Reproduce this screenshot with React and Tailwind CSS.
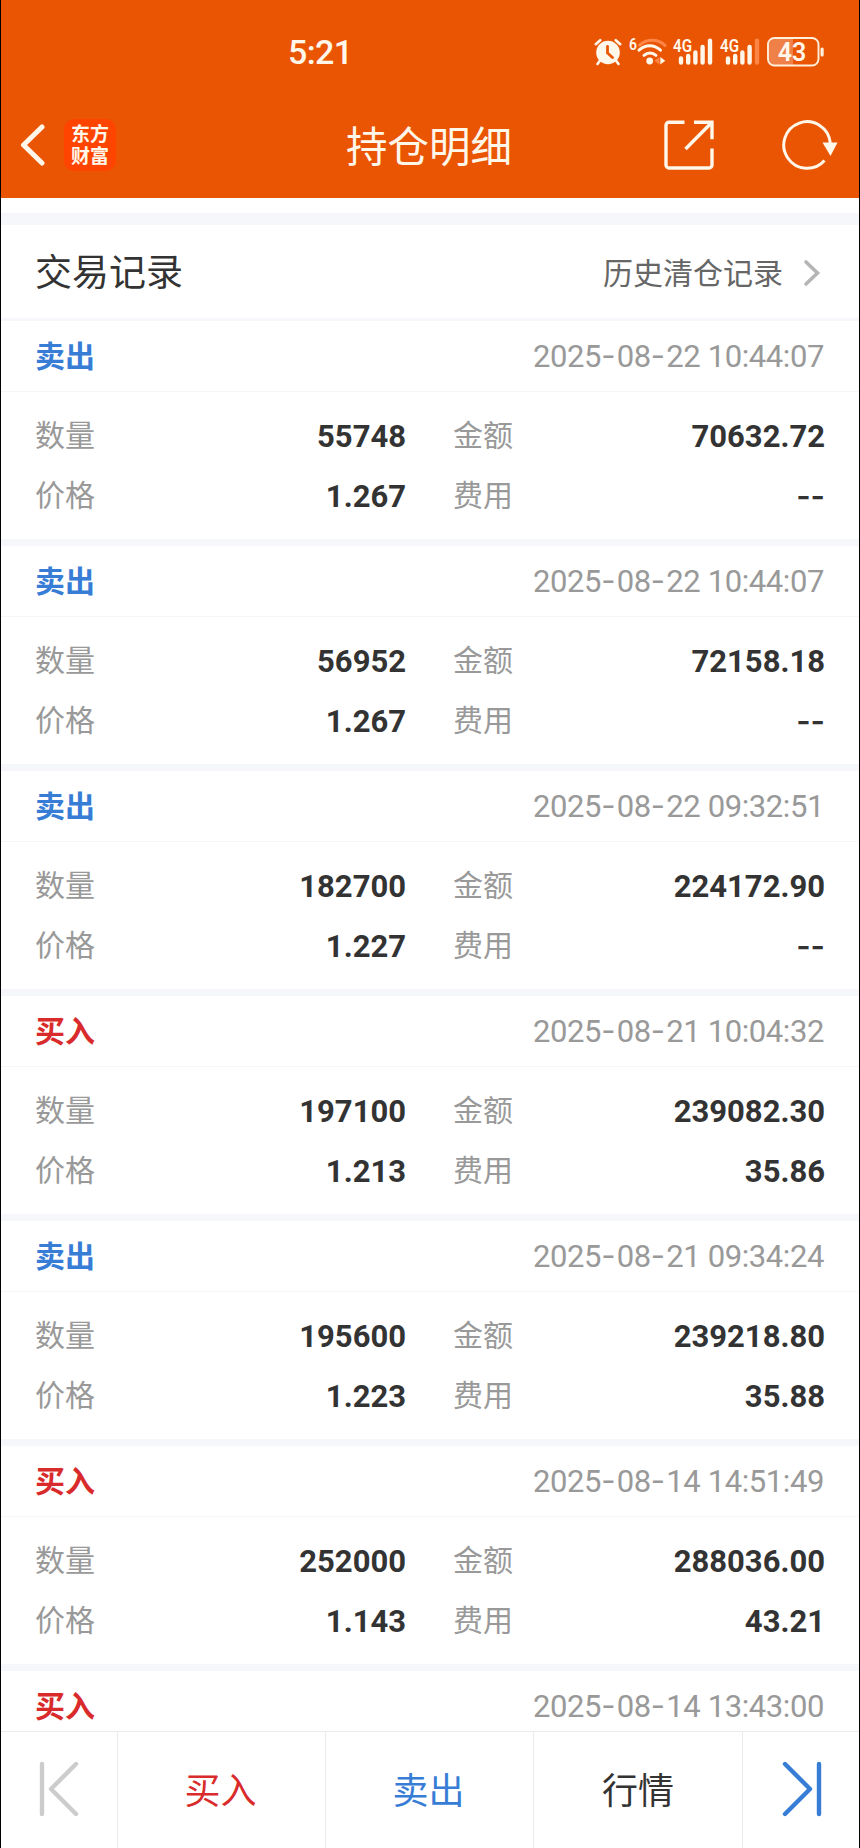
import React from 'react';

const records = [
  { type: 'sell', time: '2025-08-22 10:44:07', qty: '55748', amount: '70632.72', price: '1.267', fee: '--' },
  { type: 'sell', time: '2025-08-22 10:44:07', qty: '56952', amount: '72158.18', price: '1.267', fee: '--' },
  { type: 'sell', time: '2025-08-22 09:32:51', qty: '182700', amount: '224172.90', price: '1.227', fee: '--' },
  { type: 'buy', time: '2025-08-21 10:04:32', qty: '197100', amount: '239082.30', price: '1.213', fee: '35.86' },
  { type: 'sell', time: '2025-08-21 09:34:24', qty: '195600', amount: '239218.80', price: '1.223', fee: '35.88' },
  { type: 'buy', time: '2025-08-14 14:51:49', qty: '252000', amount: '288036.00', price: '1.143', fee: '43.21' },
  { type: 'buy', time: '2025-08-14 13:43:00' },
];

const AlarmIcon = () => (
  <svg width="28" height="28" viewBox="0 0 28 28" fill="none" stroke="#fff7ea" strokeLinecap="round">
    <path d="M1.800 6.200 6.200 2.200M26.200 6.200l-4.400-4M6 22.500 3.500 26M22 22.500l2.500 3.500" strokeWidth="2.600" />
    <circle cx="14" cy="14.500" r="11.800" fill="#fff7ea" stroke="none" />
    <path d="M13.500 8.500v6.500l5 4.500" stroke="#ea5504" strokeWidth="2.800" />
  </svg>
);

const WifiIcon = () => (
  <svg width="38" height="30" viewBox="0 0 38 30" fill="none" strokeLinecap="round" className="overflow-visible">
    <text x="0" y="13" fill="#fff7ea" fontSize="17" fontWeight="600" textLength="8" lengthAdjust="spacingAndGlyphs">6</text>
    <path d="M10.500 8.200C18 1.600 29 1.800 36 8.400" stroke="#ff8546" strokeWidth="3" />
    <path d="M10 13.200c6.500-6 15-6 21.500 0M15 18.300c3.500-3.200 8.500-3.200 12 0" stroke="#fff7ea" strokeWidth="3" />
    <circle cx="20.700" cy="24" r="3.400" fill="#fff7ea" />
    <path d="M30.500 20v7.500l-5-3.700z" fill="#ff8546" />
    <path d="M31.300 20v7.500l5-3.700z" fill="#fff7ea" />
  </svg>
);

const SignalIcon = ({ weak }) => (
  <svg width="40" height="30" viewBox="0 0 40 30" strokeWidth="4.400" strokeLinecap="round" className="overflow-visible">
    <text x="0" y="14.500" fill="#fff7ea" fontSize="18.500" fontWeight="600" textLength="19" lengthAdjust="spacingAndGlyphs">4G</text>
    <path d="M8 21.500v4M15.200 19v6.500M22.400 15.500v10M29.600 10v15.500" stroke="#fff7ea" />
    <path d="M37 3.700v21.800" stroke={weak ? '#ff8546' : '#fff7ea'} />
  </svg>
);

const BatteryIcon = () => (
  <svg width="58" height="30" viewBox="0 0 58 30">
    <path d="M8 2h18v26H8a6 6 0 0 1-6-6V8a6 6 0 0 1 6-6z" fill="#ef8048" />
    <rect x="1" y="1" width="50.500" height="27.500" rx="6.500" fill="none" stroke="#fff0dc" strokeWidth="1.900" />
    <rect x="53.500" y="10.500" width="3.200" height="9" rx="1.500" fill="#fff0dc" />
    <text x="25" y="23.800" textAnchor="middle" fill="#fff7ea" fontSize="25" fontWeight="600">43</text>
  </svg>
);

const StatusBar = () => (
  <div className="flex h-[98px] items-start justify-between pl-[287px] pr-[34px] text-[#fff7ea] font-[Roboto,sans-serif]">
    <span className="mt-[32px] text-[34px] leading-[40px] font-medium tracking-[-0.6px]">5:21</span>
    <div className="mt-[37px] flex">
      <div className="mt-px"><AlarmIcon /></div>
      <div className="ml-[7px]"><WifiIcon /></div>
      <div className="ml-[6px]"><SignalIcon /></div>
      <div className="ml-[7px]"><SignalIcon weak /></div>
      <div className="ml-[7px]"><BatteryIcon /></div>
    </div>
  </div>
);

const TitleBar = () => (
  <div className="flex h-[100px] items-center pl-[19px] pr-[21px]">
    <div className="flex flex-1 items-center">
      <svg width="26" height="44" viewBox="0 0 26 44" fill="none" stroke="#fff7ea" strokeWidth="5" strokeLinecap="round" strokeLinejoin="round" className="mb-[6px]">
        <path d="M22 4 3.500 22 22 40" />
      </svg>
      <div className="mb-[6px] ml-[18px] flex h-[52px] w-[52px] flex-col items-center justify-center rounded-[10px] bg-[#ff4400] pb-[2px] text-[19px] leading-[22px] font-bold text-[#fff7ea]">
        东方<br />财富
      </div>
    </div>
    <h1 className="mb-[8px] text-[41.5px] leading-[60px] text-[#fff7ea]">持仓明细</h1>
    <div className="mb-[6px] flex flex-1 items-center justify-end">
      <svg width="50" height="50" viewBox="0 0 50 50" fill="none" stroke="#fff7ea" strokeWidth="3.400">
        <path d="M20.500 2.200H5a3 3 0 0 0-3 3V45a3 3 0 0 0 3 3h40a3 3 0 0 0 3-3V28.500" />
        <path d="M30 2.200h18v17M48 2.200 21.500 29" />
      </svg>
      <svg width="56" height="50" viewBox="0 0 56 50" fill="none" className="ml-[68px]">
        <path d="M42.500 40.500A23.300 23.300 0 1 1 48.300 23" stroke="#fff7ea" strokeWidth="3" />
        <path d="M40.500 22.500h15L48.500 36z" fill="#fff7ea" />
      </svg>
    </div>
  </div>
);

const RecordTime = ({ value }) => (
  <span className="mt-[2px] text-[31px] leading-[40px] tracking-[-0.4px] text-[#999] font-[Roboto,sans-serif]">
    {value.split('-').map((part, i) => (
      <React.Fragment key={i}>
        {i > 0 && <span className="align-[-1px] leading-none tracking-[1.3px] font-['Inter',sans-serif] [font-feature-settings:'case']">-</span>}
        {part}
      </React.Fragment>
    ))}
  </span>
);

const Field = ({ label, value }) => (
  <div className="flex h-[60px] items-center justify-between">
    <span className="mb-[6px] text-[30px] leading-[44px] text-[#999]">{label}</span>
    <span className={value === '--'
      ? "text-[31px] font-semibold text-[#333] font-['Inter',sans-serif]"
      : 'mt-[2px] text-[31px] font-bold text-[#333] font-[Roboto,sans-serif]'}
    >
      {value}
    </span>
  </div>
);

const RecordCard = ({ record }) => (
  <section className={record.qty ? 'h-[225px] shrink-0 border-b-[7px] border-[#f5f7fa]' : 'shrink-0'}>
    <div className="flex h-[71px] items-center justify-between border-b border-[#f5f6f7] pl-[34px] pr-[35px]">
      <span className={record.type === 'buy'
        ? 'mb-[4px] text-[30px] leading-[44px] font-bold text-[#d92b2b]'
        : 'mb-[4px] text-[30px] leading-[44px] font-bold text-[#377dd6]'}
      >
        {record.type === 'buy' ? '买入' : '卖出'}
      </span>
      <RecordTime value={record.time} />
    </div>
    {record.qty && (
      <div className="grid grid-cols-[371px_372px] gap-x-[47px] pt-[14px] pl-[34px]">
        <Field label="数量" value={record.qty} />
        <Field label="金额" value={record.amount} />
        <Field label="价格" value={record.price} />
        <Field label="费用" value={record.fee} />
      </div>
    )}
  </section>
);

const BottomBar = () => (
  <nav className="grid h-[117px] shrink-0 grid-cols-[117px_208px_208px_209px_116px] divide-x divide-[#ebebeb] border-t border-[#ebebeb] text-[36px] leading-[48px]">
    <div className="flex items-center justify-center">
      <svg width="40" height="56" viewBox="0 0 40 56" fill="none" stroke="#ccc" strokeWidth="4.400" strokeLinecap="round" strokeLinejoin="round" className="mb-[3px]">
        <path d="M3 3v50M37 3 12 28l25 25" />
      </svg>
    </div>
    <div className="flex items-center justify-center pr-[2px] pb-[4px] text-[#d92b2b]">买入</div>
    <div className="flex items-center justify-center pr-[2px] pb-[4px] text-[#377dd6]">卖出</div>
    <div className="flex items-center justify-center pb-[4px] text-[#333]">行情</div>
    <div className="flex items-center justify-center pl-[2px]">
      <svg width="40" height="56" viewBox="0 0 40 56" fill="none" stroke="#377dd6" strokeWidth="4.400" strokeLinecap="round" strokeLinejoin="round" className="mb-[3px]">
        <path d="M37 3v50M3 3l25 25L3 53" />
      </svg>
    </div>
  </nav>
);

const App = () => {
  return (
    <div className="flex h-[1848px] w-[860px] flex-col overflow-hidden border-x border-black bg-white font-['Noto_Sans_CJK_SC',sans-serif]">
      <header className="h-[198px] shrink-0 bg-[#ea5504]">
        <StatusBar />
        <TitleBar />
      </header>

      <main className="flex min-h-0 flex-1 flex-col overflow-hidden">
        <div className="mt-[15px] h-[12px] shrink-0 bg-[#f5f7fa]" />
        <div className="flex h-[96px] shrink-0 items-center justify-between border-b-[3px] border-[#f5f7fa] pl-[34px] pr-[38px]">
          <h2 className="mb-[4px] text-[37px] leading-[54px] text-[#333]">交易记录</h2>
          <div className="flex items-center text-[30px] text-[#666]">
            历史清仓记录
            <svg width="18" height="28" viewBox="0 0 18 28" fill="none" stroke="#b5b5b5" strokeWidth="3.600" strokeLinecap="round" className="mt-[2px] ml-[20px]">
              <path d="M3 3l11.500 11L3 25" />
            </svg>
          </div>
        </div>
        {records.map((record, i) => (
          <RecordCard key={i} record={record} />
        ))}
      </main>

      <BottomBar />
    </div>
  );
};

export default App;
